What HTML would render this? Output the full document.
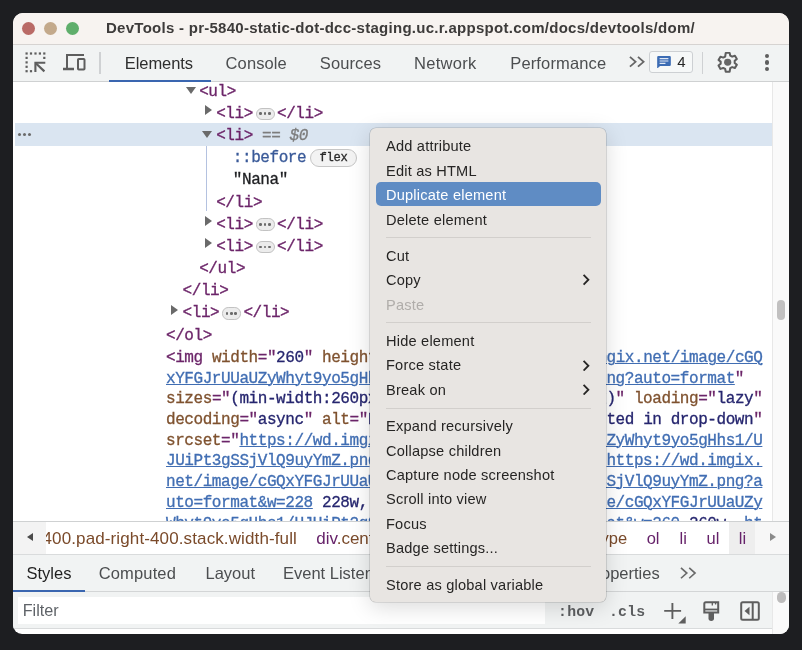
<!DOCTYPE html>
<html>
<head>
<meta charset="utf-8">
<title>DevTools</title>
<style>
*{box-sizing:border-box;margin:0;padding:0}
html,body{width:802px;height:650px;overflow:hidden}
body{background:#1d1e21;-webkit-font-smoothing:antialiased;font-family:"Liberation Sans",sans-serif;position:relative}
.abs{position:absolute}
#win{will-change:transform;position:absolute;left:13px;top:13px;width:776px;height:621px;border-radius:10px 10px 9px 9px;background:#fff;overflow:hidden}
#titlebar{position:absolute;left:0;top:0;width:776px;height:32px;background:#f7f3f0;border-bottom:1px solid #d6d3d1}
.tl{position:absolute;top:9px;width:13px;height:13px;border-radius:50%}
#title{position:absolute;left:93px;top:5.4px;height:20px;line-height:20px;font-weight:700;font-size:15px;letter-spacing:.27px;color:#3d3b3a;white-space:nowrap}
#toolbar{position:absolute;left:0;top:32px;width:776px;height:37px;background:#f1f3f3;border-bottom:1px solid #cfd1d2}
.tab{position:absolute;top:-.5px;height:36px;line-height:36px;font-size:16.5px;color:#4c4e50;white-space:nowrap}
.vsep{position:absolute;width:1.5px;background:#cfd1d3}
/* code */
#code{position:absolute;left:0;top:69px;width:759px;height:440px;overflow:hidden;background:#fff;font-family:"Liberation Mono",monospace;font-size:16px;letter-spacing:-.427px;color:#202124;-webkit-text-stroke:.3px}
.row{position:absolute;left:0;height:22.18px;line-height:22.18px;white-space:pre;margin-top:1.84px}
.blk{position:absolute;left:153px;top:265.8px;line-height:20.74px;white-space:pre;color:#6c2569}
.t{color:#6c2569}
.an{color:#7f522f}
.av{color:#26266f}
.lk{color:#416eb3;text-decoration:underline;text-decoration-thickness:1.3px}
.g{color:#7d7d7d}
.pill{display:inline-block;position:relative;vertical-align:middle;width:19px;height:12.4px;border-radius:6.2px;background:#ececec;border:1px solid #c2c2c2;margin:0 2.4px 0 2.7px;top:.2px;letter-spacing:0}
.pill i{position:absolute;top:3.9px;width:2.7px;height:2.7px;border-radius:50%;background:#6b6b6b}
.arrow{position:absolute;width:0;height:0}
.ar{border-left:7.6px solid #6a6a6a;border-top:5.1px solid transparent;border-bottom:5.1px solid transparent}
.ad{border-top:7.6px solid #6a6a6a;border-left:5.05px solid transparent;border-right:5.05px solid transparent}
/* bottom */
#crumbs{position:absolute;left:0;top:508px;width:776px;height:34px;background:#fff;border-top:1px solid #cfd1d2;border-bottom:1px solid #d9dbdc;font-size:16.5px;line-height:31px;white-space:nowrap}
#crumbs span{position:absolute;top:1.3px}
.br{color:#7a4a2a}.pu{color:#66226a}
#stabs{position:absolute;left:0;top:542px;width:776px;height:37px;background:#f1f3f3;border-bottom:1px solid #d3d5d6}
#stabs .tab{height:37px;line-height:37px}
#filter{position:absolute;left:0;top:579px;width:759px;height:37px;background:#f1f3f3;border-bottom:1px solid #d9dbdc}
/* menu */
#menu{will-change:transform;position:absolute;left:369.5px;top:127.5px;width:236.4px;height:474px;border-radius:6px;background:#e8e5e2;box-shadow:0 0 0 .6px rgba(0,0,0,.2),0 5px 22px rgba(0,0,0,.15);font-size:14.6px;letter-spacing:.2px;color:#262524}
.mi{position:absolute;left:16px;height:24.4px;line-height:24.4px;white-space:nowrap}
.ms{position:absolute;left:15.8px;width:205.5px;height:1px;background:#d2cfcc}
.chev{position:absolute;left:211.8px;width:8px;height:11.5px}
</style>
</head>
<body>
<div id="win">
  <div id="titlebar">
    <div class="tl" style="left:9px;background:#b96a66"></div>
    <div class="tl" style="left:31.2px;background:#c3a98b"></div>
    <div class="tl" style="left:53.2px;background:#5fae6b"></div>
    <div id="title">DevTools - pr-5840-static-dot-dcc-staging.uc.r.appspot.com/docs/devtools/dom/</div>
  </div>
  <div id="toolbar">
    <!-- inspect icon -->
    <svg class="abs" style="left:11px;top:6px" width="24" height="24" viewBox="0 0 24 24">
      <g fill="#5e5e5e"><rect x="1.5" y="1.4" width="2.2" height="2.2"/><rect x="5.9" y="1.4" width="2.2" height="2.2"/><rect x="10.4" y="1.4" width="2.2" height="2.2"/><rect x="14.8" y="1.4" width="2.2" height="2.2"/><rect x="19.2" y="1.4" width="2.2" height="2.2"/><rect x="1.5" y="5.8" width="2.2" height="2.2"/><rect x="1.5" y="10.3" width="2.2" height="2.2"/><rect x="1.5" y="14.7" width="2.2" height="2.2"/><rect x="1.5" y="19.1" width="2.2" height="2.2"/><rect x="19.2" y="5.8" width="2.2" height="2.2"/><rect x="5.9" y="19.1" width="2.2" height="2.2"/></g>
      <path d="M21.3 11.8H11.4V21" fill="none" stroke="#5e5e5e" stroke-width="2.1"/>
      <path d="M11.8 12.2L20.4 20.4" fill="none" stroke="#5e5e5e" stroke-width="2.2"/>
    </svg>
    <!-- device icon -->
    <svg class="abs" style="left:49px;top:8px" width="24" height="20" viewBox="0 0 24 20" fill="none" stroke="#5e5e5e" stroke-width="2">
      <path d="M5 15.5V2H22"/>
      <path d="M1 16H12" stroke-width="2.6"/>
      <rect x="16" y="6" width="6.5" height="10.5" rx="0.8"/>
    </svg>
    <div class="vsep" style="left:86.2px;top:6.500px;height:22px"></div>
    <div class="tab" style="left:111.7px;color:#2e2e2e;letter-spacing:-.05px">Elements</div>
    <div class="abs" style="left:96.4px;top:35px;width:101.6px;height:2px;background:#3a66b0"></div>
    <div class="tab" style="left:212.6px;letter-spacing:.1px">Console</div>
    <div class="tab" style="left:306.8px;letter-spacing:.1px">Sources</div>
    <div class="tab" style="left:401px;letter-spacing:.3px">Network</div>
    <div class="tab" style="left:497.3px;letter-spacing:.13px">Performance</div>
    <!-- >> -->
    <svg class="abs" style="left:615.7px;top:11.2px" width="17" height="11.6" viewBox="0 0 18 13" preserveAspectRatio="none" fill="none" stroke="#666" stroke-width="1.9">
      <path d="M1 1L7 6.5L1 12"/><path d="M9.5 1L15.5 6.5L9.5 12"/>
    </svg>
    <!-- badge -->
    <div class="abs" style="left:636.2px;top:5.5px;width:44px;height:22px;border:1px solid #cdd0d3;border-radius:3px;background:#f6f8f8"></div>
    <svg class="abs" style="left:644px;top:10.5px" width="14" height="12.7" viewBox="0 0 14 13">
      <path d="M1.2 0H12.8Q14 0 14 1.2V9Q14 10.2 12.8 10.2H3L0 13V1.2Q0 0 1.2 0Z" fill="#3c6cb4"/>
      <path d="M2.5 2.7H11.5M2.5 5.1H11.5M2.5 7.5H8.5" stroke="#dfe8f5" stroke-width="1.2"/>
    </svg>
    <div class="tab" style="left:664.3px;top:-1px;color:#262626;font-size:15px">4</div>
    <div class="vsep" style="left:688.700px;top:6.500px;height:22px"></div>
    <!-- gear -->
    <svg class="abs" style="left:703.3px;top:5.950px" width="23.4" height="22.6" viewBox="0 0 24 24" preserveAspectRatio="none" fill="none" stroke="#5e5e5e" stroke-width="2.1" stroke-linejoin="round">
      <path d="M10 2h4l.6 2.9 2 1.1 2.8-1 2 3.5-2.2 1.9v2.3l2.2 1.9-2 3.5-2.8-1-2 1.1L14 22h-4l-.6-2.9-2-1.1-2.8 1-2-3.5 2.2-1.9v-2.3L2.600 9.500l2-3.5 2.800 1 2-1.100z"/>
      <circle cx="12" cy="12" r="3.700" fill="#666" stroke="none"/>
    </svg>
    <!-- kebab -->
    <div class="abs" style="left:751.5px;top:8.600px;width:4.400px;height:4.400px;border-radius:50%;background:#5e5e5e"></div>
    <div class="abs" style="left:751.5px;top:15.3px;width:4.400px;height:4.400px;border-radius:50%;background:#5e5e5e"></div>
    <div class="abs" style="left:751.5px;top:21.6px;width:4.400px;height:4.400px;border-radius:50%;background:#5e5e5e"></div>
  </div>

  <div id="code">
    <div class="abs" style="left:2px;top:41px;width:757px;height:22.6px;background:#dae5f1"></div>
    <div class="abs" style="left:4.8px;top:50.800px;width:3.300px;height:3.300px;border-radius:50%;background:#6b6b6b;box-shadow:5px 0 0 #6b6b6b,10px 0 0 #6b6b6b"></div>
    <div class="abs" style="left:192.9px;top:63.700px;width:1px;height:65.5px;background:#b4c2e0"></div>

    <div class="arrow ad" style="left:172.9px;top:4.700px"></div>
    <div class="row" style="left:186.2px;top:-3.2px"><span class="t">&lt;ul&gt;</span></div>

    <div class="arrow ar" style="left:191.5px;top:23.3px"></div>
    <div class="row" style="left:203.2px;top:19px"><span class="t">&lt;li&gt;</span><span class="pill"><i style="left:2.8px"></i><i style="left:7.1px"></i><i style="left:11.4px"></i></span><span class="t">&lt;/li&gt;</span></div>

    <div class="arrow ad" style="left:189.400px;top:48.600px"></div>
    <div class="row" style="left:203.2px;top:41.2px"><span class="t">&lt;li&gt;</span><span class="g"> == <i>$0</i></span></div>

    <div class="row" style="left:219.800px;top:63.400px"><span style="color:#3a5a99">::before</span></div>
    <div class="abs" style="left:297.400px;top:66.700px;width:46.400px;height:18.500px;border:1px solid #c6c6c6;border-radius:9.5px;background:#f3f3f3;font-size:12.2px;letter-spacing:-.3px;line-height:16.5px;text-align:center;color:#2a2a2a;-webkit-text-stroke:.3px">flex</div>
    <div class="row" style="left:219.800px;top:85.600px">"Nana"</div>
    <div class="row" style="left:203.2px;top:107.700px"><span class="t">&lt;/li&gt;</span></div>

    <div class="arrow ar" style="left:191.5px;top:134.2px"></div>
    <div class="row" style="left:203.2px;top:129.900px"><span class="t">&lt;li&gt;</span><span class="pill"><i style="left:2.8px"></i><i style="left:7.1px"></i><i style="left:11.4px"></i></span><span class="t">&lt;/li&gt;</span></div>
    <div class="arrow ar" style="left:191.5px;top:156.4px"></div>
    <div class="row" style="left:203.2px;top:152.100px"><span class="t">&lt;li&gt;</span><span class="pill"><i style="left:2.8px"></i><i style="left:7.1px"></i><i style="left:11.4px"></i></span><span class="t">&lt;/li&gt;</span></div>
    <div class="row" style="left:186.2px;top:174.300px"><span class="t">&lt;/ul&gt;</span></div>
    <div class="row" style="left:169.600px;top:196.500px"><span class="t">&lt;/li&gt;</span></div>
    <div class="arrow ar" style="left:158.200px;top:222.900px"></div>
    <div class="row" style="left:169.600px;top:218.600px"><span class="t">&lt;li&gt;</span><span class="pill"><i style="left:2.8px"></i><i style="left:7.1px"></i><i style="left:11.4px"></i></span><span class="t">&lt;/li&gt;</span></div>
    <div class="row" style="left:153px;top:240.800px"><span class="t">&lt;/ol&gt;</span></div>

    <div class="blk"><span class="t">&lt;img </span><span class="an">width</span>="<span class="av">260</span>" <span class="an">height</span>="<span class="av">260</span>" <span class="an">src</span>="<span class="lk">https://wd.imgix.net/image/cGQ</span>
<span class="lk">xYFGJrUUaUZyWhyt9yo5gHhs1/UJUiPt3gSSjVlQ9uyYmZ.png?auto=format</span>"
<span class="an">sizes</span>="<span class="av">(min-width:260px) 260px, calc(100vw -48px)</span>" <span class="an">loading</span>="<span class="av">lazy</span>"
<span class="an">decoding</span>="<span class="av">async</span>" <span class="an">alt</span>="<span class="av">Na duplicated and highlighted in drop-down</span>"
<span class="an">srcset</span>="<span class="lk">https://wd.imgix.net/image/cGQxYFGJrUUaUZyWhyt9yo5gHhs1/U</span>
<span class="lk">JUiPt3gSSjVlQ9uyYmZ.png?auto=format&amp;w=200</span><span class="av"> 200w, </span><span class="lk">https://wd.imgix.</span>
<span class="lk">net/image/cGQxYFGJrUUaUZyWhyt9yo5gHhs1/UJUiPt3gSSjVlQ9uyYmZ.png?a</span>
<span class="lk">uto=format&amp;w=228</span><span class="av"> 228w, </span><span class="lk">https://wd.imgix.net/image/cGQxYFGJrUUaUZy</span>
<span class="lk">Whyt9yo5gHhs1/UJUiPt3gSSjVlQ9uyYmZ.png?auto=format&amp;w=260</span><span class="av"> 260w, </span><span class="lk">ht</span></div>
  </div>
  <!-- code scrollbar -->
  <div class="abs" style="left:759px;top:69px;width:17px;height:439px;background:#fafafa;border-left:1px solid #e8e8e8"></div>
  <div class="abs" style="left:764px;top:287px;width:8px;height:20px;border-radius:4px;background:#c1c0c0"></div>

  <div id="crumbs">
    <div class="abs" style="left:0;top:0;width:33px;height:32px;background:#f3f3f3"></div>
    <div class="abs" style="left:13.5px;top:11px;width:0;height:0;border-right:6.500px solid #4a4a4a;border-top:4.500px solid transparent;border-bottom:4.500px solid transparent"></div>
    <div class="abs" style="left:33px;top:0;width:683px;height:32px;overflow:hidden">
      <span class="br" style="left:-3.5px;font-size:17px;letter-spacing:.12px">400.pad-right-400.stack.width-full</span>
      <span class="pu" style="left:270.2px;font-size:17px">div<span class="br" style="position:static">.center.width-full.height-full</span></span>
      <span class="br" style="left:550px">type</span>
      <span class="pu" style="left:600.700px">ol</span>
      <span class="pu" style="left:633.600px">li</span>
      <span class="pu" style="left:660.500px">ul</span>
    </div>
    <div class="abs" style="left:716px;top:0;width:25.600px;height:32px;background:#eeeeee"></div>
    <span class="pu" style="left:725.800px">li</span>
    <div class="abs" style="left:741.600px;top:0;width:35px;height:32px;background:#f7f7f7"></div>
    <div class="abs" style="left:757px;top:11px;width:0;height:0;border-left:6.500px solid #8a8a8a;border-top:4.500px solid transparent;border-bottom:4.500px solid transparent"></div>
  </div>

  <div id="stabs">
    <div class="tab" style="left:13.500px;color:#1f1f1f">Styles</div>
    <div class="abs" style="left:0;top:34.800px;width:72px;height:2.2px;background:#3a66b0"></div>
    <div class="tab" style="left:85.700px;letter-spacing:.15px">Computed</div>
    <div class="tab" style="left:192.500px">Layout</div>
    <div class="tab" style="left:270px">Event Listeners</div>
    <div class="tab" style="left:571.5px">Properties</div>
    <svg class="abs" style="left:666.800px;top:12px" width="17.5" height="12.2" viewBox="0 0 18 13" preserveAspectRatio="none" fill="none" stroke="#6a6a6a" stroke-width="1.7">
      <path d="M1 1L7 6.5L1 12"/><path d="M9.500 1L15.500 6.500L9.500 12"/>
    </svg>
  </div>

  <div id="filter">
    <div class="abs" style="left:4.500px;top:5.300px;width:754.500px;height:26.700px;background:#fff"></div>
    <div class="abs" style="left:9.700px;top:5.300px;height:26.700px;line-height:27px;font-size:16.2px;color:#5f6368">Filter</div>
    <div class="abs" style="left:532px;top:0;width:227px;height:36px;background:#f1f3f3"></div>
    <div class="abs" style="left:545.1px;top:6.800px;height:26.700px;line-height:27px;font-family:'Liberation Mono',monospace;font-weight:700;font-size:14.8px;letter-spacing:.2px;color:#5c5e60">:hov</div>
    <div class="abs" style="left:596px;top:6.800px;height:26.700px;line-height:27px;font-family:'Liberation Mono',monospace;font-weight:700;font-size:14.8px;letter-spacing:.2px;color:#5c5e60">.cls</div>
    <!-- plus -->
    <svg class="abs" style="left:649.7px;top:9.500px" width="23" height="23" viewBox="0 0 23 23" fill="none" stroke="#5e5e5e" stroke-width="1.900">
      <path d="M1.2 8.900H18.100M9.4 0.900V17.100"/>
      <path d="M22.700 14.200V21.600H15.300Z" fill="#5e5e5e" stroke="none"/>
    </svg>
    <!-- brush -->
    <svg class="abs" style="left:689px;top:8px" width="19" height="22" viewBox="0 0 19 22" fill="none" stroke="#5e5e5e" stroke-width="2">
      <path d="M3.800 2.200H16.200V12.500H2.300V3.700Q2.300 2.200 3.800 2.200Z"/>
      <path d="M2.300 9.500H16.200" stroke-width="1.800"/>
      <path d="M10.300 2.200V5.400M13.600 2.200V4.600" stroke-width="1.300"/>
      <path d="M6.500 13H12V18.300A2.750 2.750 0 0 1 6.500 18.300Z" fill="#5e5e5e" stroke="none"/>
    </svg>
    <!-- sidebar -->
    <svg class="abs" style="left:727px;top:8.500px" width="20" height="20" viewBox="0 0 20 20" fill="none" stroke="#5e5e5e" stroke-width="2">
      <rect x="1.200" y="1.200" width="17.600" height="17.600" rx="1.500"/>
      <path d="M12.700 1.200V18.800"/>
      <path d="M9.500 5.800V14.200L4.500 10Z" fill="#5e5e5e" stroke="none"/>
    </svg>
  </div>
  <div class="abs" style="left:759px;top:579px;width:17px;height:42px;background:#fafafa;border-left:1px solid #e8e8e8"></div>
  <div class="abs" style="left:763.800px;top:579.300px;width:9px;height:10.500px;border-radius:4.500px;background:#bdbcbc"></div>
</div>

<div id="menu">
  <div class="abs" style="left:6px;top:54.2px;width:224.600px;height:24.300px;border-radius:5px;background:#5f8cc4"></div>
  <div class="mi" style="top:6.300px">Add attribute</div>
  <div class="mi" style="top:30.700px">Edit as HTML</div>
  <div class="mi" style="top:55.100px;color:#fff">Duplicate element</div>
  <div class="mi" style="top:79.500px">Delete element</div>
  <div class="ms" style="top:109.200px"></div>
  <div class="mi" style="top:115.800px">Cut</div>
  <div class="mi" style="top:140.200px">Copy</div>
  <div class="mi" style="top:164.600px;color:#b0adaa">Paste</div>
  <div class="ms" style="top:193.900px"></div>
  <div class="mi" style="top:200.900px">Hide element</div>
  <div class="mi" style="top:225.300px">Force state</div>
  <div class="mi" style="top:249.700px">Break on</div>
  <div class="ms" style="top:280px"></div>
  <div class="mi" style="top:286.100px">Expand recursively</div>
  <div class="mi" style="top:310.500px">Collapse children</div>
  <div class="mi" style="top:334.900px">Capture node screenshot</div>
  <div class="mi" style="top:359.300px">Scroll into view</div>
  <div class="mi" style="top:383.700px">Focus</div>
  <div class="mi" style="top:408.100px">Badge settings...</div>
  <div class="ms" style="top:437.800px"></div>
  <div class="mi" style="top:444.500px">Store as global variable</div>
  <svg class="chev" style="top:146.400px" viewBox="0 0 8 12" fill="none" stroke="#262524" stroke-width="1.9"><path d="M1.500 1L6.500 6L1.500 11"/></svg>
  <svg class="chev" style="top:231.500px" viewBox="0 0 8 12" fill="none" stroke="#262524" stroke-width="1.9"><path d="M1.500 1L6.500 6L1.500 11"/></svg>
  <svg class="chev" style="top:255.900px" viewBox="0 0 8 12" fill="none" stroke="#262524" stroke-width="1.9"><path d="M1.500 1L6.500 6L1.500 11"/></svg>
</div>
</body>
</html>
